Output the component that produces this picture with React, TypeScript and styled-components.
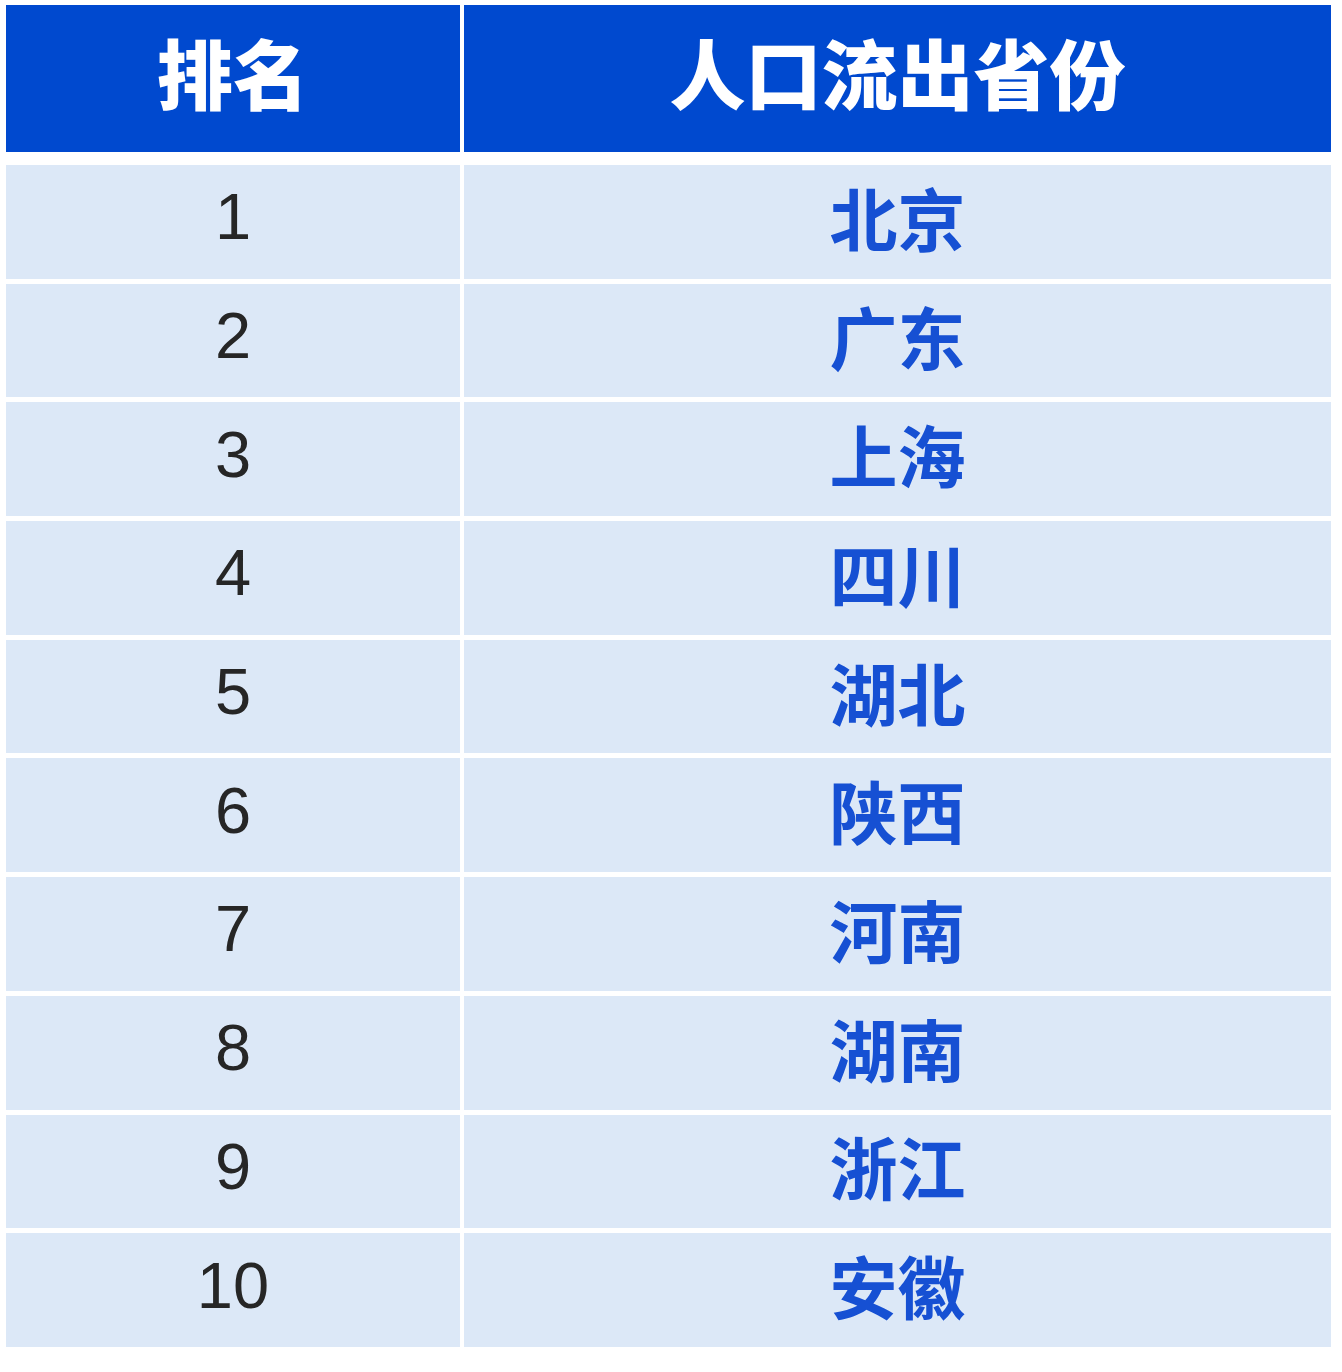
import React from 'react'
import styled, { createGlobalStyle } from 'styled-components';

const GlobalStyle = createGlobalStyle`
  html, body {
    margin: 0;
    padding: 0;
    background: #ffffff;
  }
`;

const Page = styled.div`
    width: 1342px;
    height: 1372px;
    padding: 5px 11px 0 6px;
    box-sizing: border-box;
    background: #ffffff;
    font-family: "Noto Sans CJK SC", "Noto Sans", sans-serif;
`;

const Table = styled.div`
    display: flex;
    flex-direction: column;
    gap: 5px;
`;

const Row = styled.div<{ $head?: boolean }>`
    display: grid;
    grid-template-columns: 454px 1fr;
    column-gap: 4px;
    height: ${p => (p.$head ? '147px' : '113.7px')};
    margin-bottom: ${p => (p.$head ? '8px' : '0')};
`;

const HeadCell = styled.div`
    background: #0049cf;
    color: #ffffff;
    display: flex;
    align-items: center;
    justify-content: center;
    font-size: 76px;
    font-weight: 900;
    line-height: 1;
    padding-bottom: 16px;
    box-sizing: border-box;
`;

const Cell = styled.div`
    background: #dce8f7;
    display: flex;
    align-items: center;
    justify-content: center;
    line-height: 1;
    padding-bottom: 10px;
    box-sizing: border-box;
`;

const Rank = styled.span`
    font-family: "Liberation Sans", Arial, sans-serif;
    font-size: 65px;
    color: #262626;
`;

const Province = styled.span`
    font-family: "Noto Sans CJK SC", sans-serif;
    font-size: 68px;
    font-weight: 700;
    color: #1650d3;
`;

const provinces = ['北京', '广东', '上海', '四川', '湖北', '陕西', '河南', '湖南', '浙江', '安徽'];

const App = () => {
  return (
    <Page>
        <GlobalStyle />
        <Table>
            <Row $head>
                <HeadCell>排名</HeadCell>
                <HeadCell>人口流出省份</HeadCell>
            </Row>
            {provinces.map((name, i) => (
                <Row key={name}>
                    <Cell><Rank>{i + 1}</Rank></Cell>
                    <Cell><Province>{name}</Province></Cell>
                </Row>
            ))}
        </Table>
    </Page>
  )
}

export default App;
